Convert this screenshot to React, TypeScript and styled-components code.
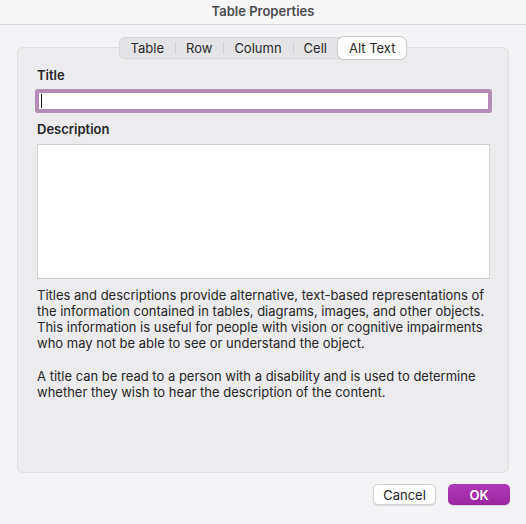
import styled, { createGlobalStyle } from "styled-components";

const tabs = ["Table", "Row", "Column", "Cell", "Alt Text"];
const activeTab = "Alt Text";

export default function App() {
  const activeIndex = tabs.indexOf(activeTab);

  return (
    <>
      <GlobalStyle />
      <Window>
        <TitleBar>Table Properties</TitleBar>
        <Body>
          <Panel>
            <Segmented>
              {tabs.map((tab, i) => (
                <Segment
                  key={tab}
                  $active={i === activeIndex}
                  $divider={i > 0 && i !== activeIndex && i - 1 !== activeIndex}
                >
                  {tab}
                </Segment>
              ))}
            </Segmented>
            <Fields>
              <Label>Title</Label>
              <InputWrap>
                <TitleInput autoFocus />
              </InputWrap>
              <Label $gap>Description</Label>
              <DescriptionBox />
              <Help>
                Titles and descriptions provide alternative, text-based
                representations of the information contained in tables,
                diagrams, images, and other objects. This information is useful
                for people with vision or cognitive impairments who may not be
                able to see or understand the object.
              </Help>
              <Help $spaced>
                A title can be read to a person with a disability and is used to
                determine whether they wish to hear the description of the
                content.
              </Help>
            </Fields>
          </Panel>
          <Footer>
            <Button>Cancel</Button>
            <Button $primary>OK</Button>
          </Footer>
        </Body>
      </Window>
    </>
  );
}

const GlobalStyle = createGlobalStyle`
  html, body {
    margin: 0;
    background: #f4f4f6;
  }

  body {
    font-family: Inter, "Liberation Sans", Arial, sans-serif;
    font-size: 13px;
    color: #262626;
  }
`;

const Window = styled.div`
  width: 526px;
  height: 524px;
  display: flex;
  flex-direction: column;
  background: #f4f4f6;
`;

const TitleBar = styled.div`
  height: 25px;
  display: flex;
  align-items: center;
  justify-content: center;
  border-bottom: 1px solid #dadadc;
  background: #f7f7f8;
  font-weight: 600;
  font-size: 13px;
  color: #4b4b4d;
  box-sizing: border-box;
  padding-bottom: 2px;
`;

const Body = styled.div`
  flex: 1;
  display: flex;
  flex-direction: column;
  padding: 22px 17px 0;
`;

const Panel = styled.div`
  height: 426px;
  box-sizing: border-box;
  background: #ececee;
  border: 1px solid #e0e0e2;
  border-radius: 6px;
  display: flex;
  flex-direction: column;
  align-items: center;
`;

const Segmented = styled.div`
  margin-top: -11px;
  height: 22px;
  box-sizing: border-box;
  display: flex;
  background: #e4e4e6;
  border: 1px solid #d6d6d8;
  border-radius: 6px;
`;

const Segment = styled.div<{ $active?: boolean; $divider?: boolean }>`
  position: relative;
  display: flex;
  align-items: center;
  padding: 0 11px;
  margin: -1px 0;
  font-size: 13px;
  color: #2a2a2a;
  border-radius: 6px;
  background: ${p => (p.$active ? "#ffffff" : "transparent")};
  box-shadow: ${p =>
    p.$active ? "0 0 0 1px #cfcfd1, 0 1px 1px rgba(0,0,0,0.12)" : "none"};

  &::before {
    content: "";
    display: ${p => (p.$divider ? "block" : "none")};
    position: absolute;
    left: 0;
    top: 5px;
    bottom: 5px;
    width: 1px;
    background: #cfcfd1;
  }
`;

const Fields = styled.div`
  align-self: stretch;
  display: flex;
  flex-direction: column;
  padding: 8px 18px 0 19px;
`;

const Label = styled.div<{ $gap?: boolean }>`
  font-weight: 600;
  font-size: 13px;
  line-height: 16px;
  color: #262626;
  margin-top: ${p => (p.$gap ? "11px" : "0")};
`;

const InputWrap = styled.div`
  position: relative;
  margin: 9px 1px 0;
  display: flex;

  &::after {
    content: "";
    position: absolute;
    left: 3px;
    top: 2px;
    width: 1px;
    height: 14px;
    background: #111;
  }
`;

const TitleInput = styled.input`
  flex: 1;
  height: 18px;
  box-sizing: border-box;
  border: 1px solid #b48ab5;
  outline: none;
  background: #ffffff;
  box-shadow: 0 0 0 3px #b58cb6;
  border-radius: 1px;
  font-family: inherit;
  font-size: 13px;
  padding: 0 2px;
  caret-color: transparent;
`;

const DescriptionBox = styled.div`
  margin-top: 7px;
  height: 135px;
  box-sizing: border-box;
  background: #ffffff;
  border: 1px solid #d3d3d5;
  border-bottom-color: #c4c4c6;
`;

const Help = styled.p<{ $spaced?: boolean }>`
  margin: ${p => (p.$spaced ? "17px" : "8px")} 0 0;
  font-size: 13px;
  line-height: 16px;
  color: #262626;
`;

const Footer = styled.div`
  display: flex;
  justify-content: flex-end;
  gap: 12px;
  margin: 11px -1px 0 0;
`;

const Button = styled.button<{ $primary?: boolean }>`
  height: 21px;
  width: ${p => (p.$primary ? "62px" : "63px")};
  padding: 0;
  box-sizing: border-box;
  border-radius: 5px;
  font-family: inherit;
  font-size: 13px;
  font-weight: ${p => (p.$primary ? 600 : 400)};
  color: ${p => (p.$primary ? "#ffffff" : "#262626")};
  background: ${p =>
    p.$primary ? "linear-gradient(#b03ab6, #9a269f)" : "#ffffff"};
  border: ${p => (p.$primary ? "none" : "1px solid #d2d2d4")};
  box-shadow: 0 1px 1px rgba(0, 0, 0, 0.12);
  display: flex;
  align-items: center;
  justify-content: center;
`;
